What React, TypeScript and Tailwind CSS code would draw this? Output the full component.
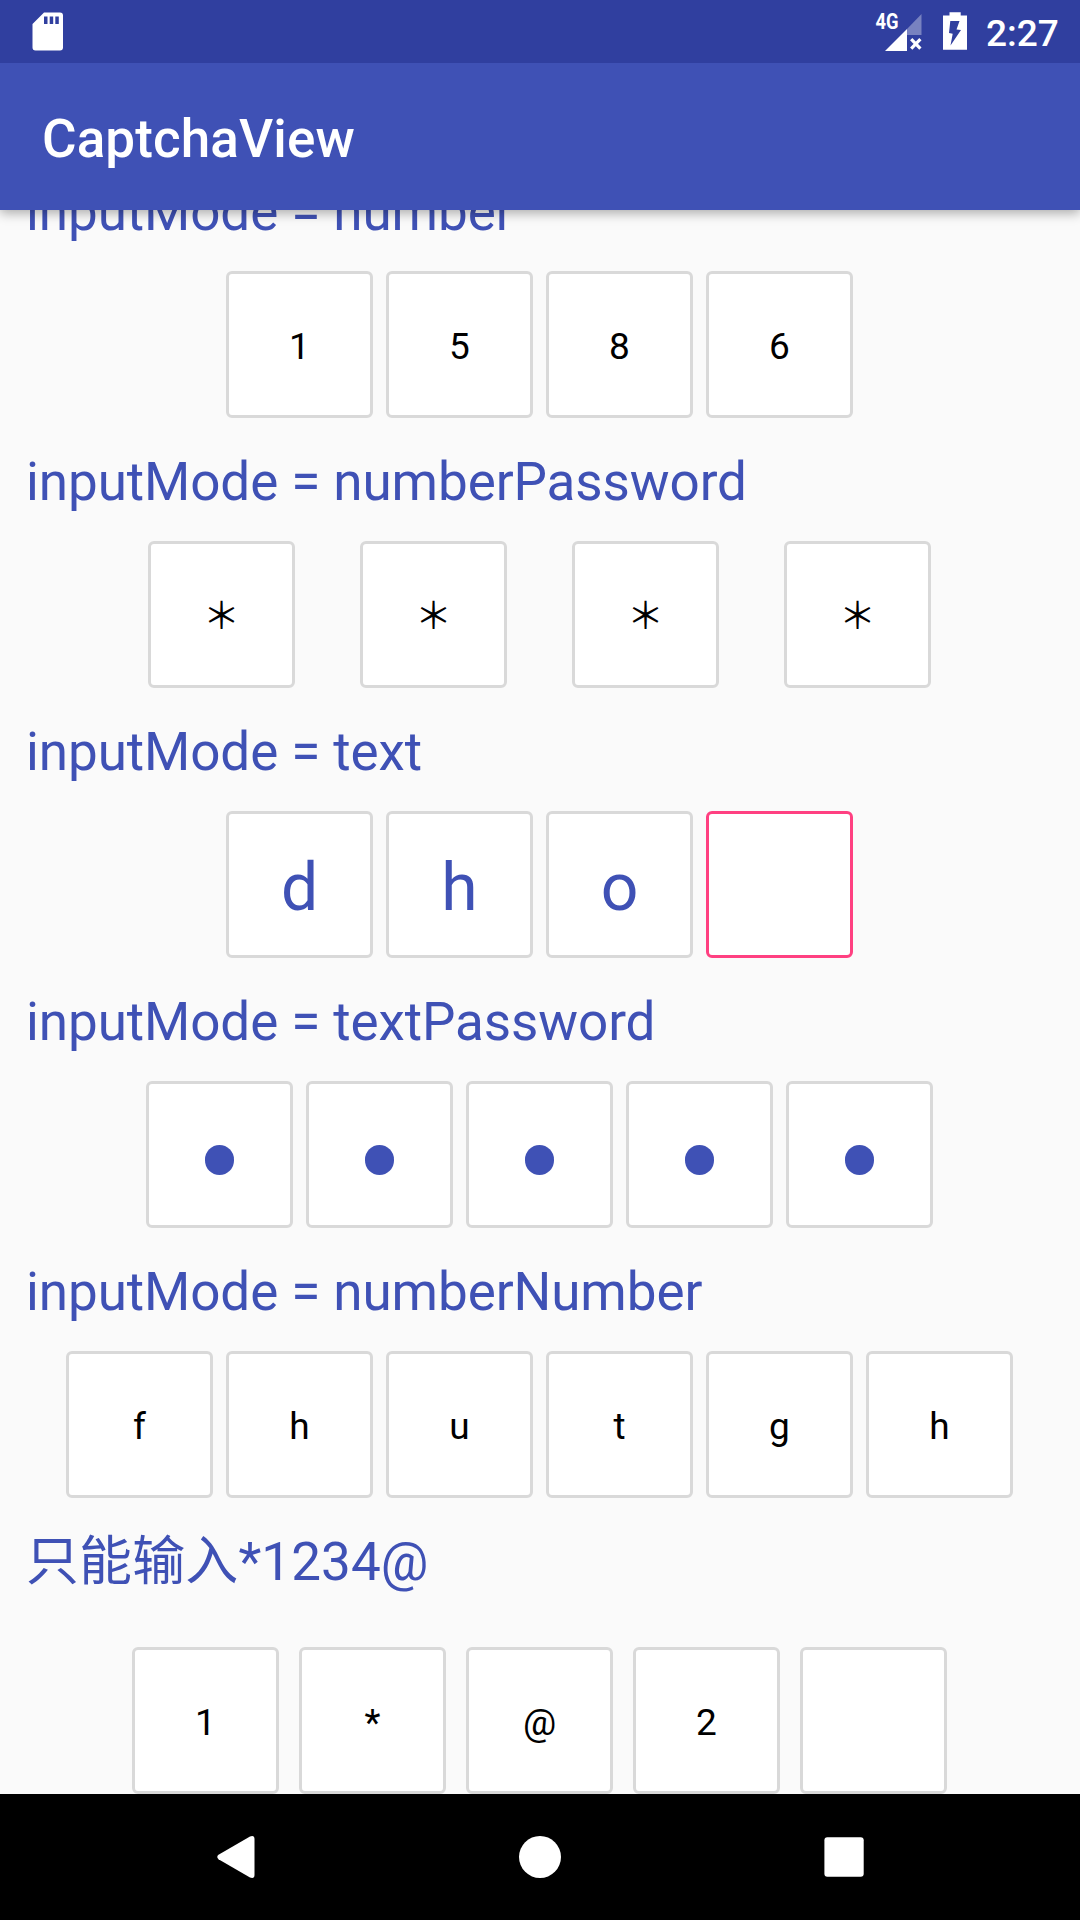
import React from "react";
import clsx from "clsx";

type Row = {
  label: string;
  cells: string[];
  gap: string;
  large?: boolean;
  focused?: number;
  tall?: boolean;
};

const rows: Row[] = [
  { label: "inputMode = number", cells: ["1", "5", "8", "6"], gap: "gap-[13px]" },
  { label: "inputMode = numberPassword", cells: ["＊", "＊", "＊", "＊"], gap: "gap-[65px]" },
  { label: "inputMode = text", cells: ["d", "h", "o", ""], gap: "gap-[13px]", large: true, focused: 3 },
  { label: "inputMode = textPassword", cells: ["•", "•", "•", "•", "•"], gap: "gap-[13px]" },
  { label: "inputMode = numberNumber", cells: ["f", "h", "u", "t", "g", "h"], gap: "gap-[13px]" },
  { label: "只能输入*1234@", cells: ["1", "*", "@", "2", ""], gap: "gap-5", tall: true },
];

function Cell({ value, large, focused }: { value: string; large?: boolean; focused: boolean }) {
  return (
    <div
      className={clsx(
        "flex size-[147px] items-center justify-center rounded-md border-[3px] bg-white leading-none",
        focused ? "border-[#ff4081]" : "border-[#d9d9d9]",
        large ? "pt-[6px] text-[66px] text-[#3f51b5]" : "pt-[4px] text-[37px] text-black",
      )}
    >
      {value === "•" ? <span className="mt-[7px] size-[29.6px] rounded-full bg-[#3f51b5]" /> : value}
    </div>
  );
}

function CaptchaRow({ row }: { row: Row }) {
  return (
    <section className="shrink-0">
      <h2
        className={clsx(
          "pt-[3px] pl-[26px] text-[53px] leading-[123px] text-[#3f51b5]",
          row.tall ? "h-[149px] tracking-[0.1px]" : "h-[123px] tracking-[-0.09px]",
        )}
      >
        {row.label}
      </h2>
      <div className={clsx("flex justify-center pr-px", row.gap)}>
        {row.cells.map((value, i) => (
          <Cell key={i} value={value} large={row.large} focused={row.focused === i} />
        ))}
      </div>
    </section>
  );
}

function StatusBar() {
  return (
    <header className="z-20 flex h-[63px] shrink-0 items-center bg-[#303f9f] pr-[21px] pl-8 text-white">
      <svg width="32" height="63" viewBox="32 0 32 63" fill="white">
        <path
          fillRule="evenodd"
          d="M44 12.5H60Q63 12.5 63 15.5V47.5Q63 50.5 60 50.5H35.5Q32.5 50.5 32.5 47.5V24ZM44 16.5V24H47.5V16.5ZM49.7 16.5V24H53.2V16.5ZM55.3 16.5V24H58.8V16.5Z"
        />
      </svg>
      <svg className="ml-auto" width="110" height="63" viewBox="875 0 110 63" fill="white">
        <text x="875.5" y="29" fontSize="22" fontWeight="700" textLength="23" lengthAdjust="spacingAndGlyphs">
          4G
        </text>
        <path d="M885 51L907 29V51Z" />
        <path d="M907 29L921.5 14V35H907Z" opacity="0.35" />
        <path d="M911.2 39.2L920.4 48.6M920.4 39.2L911.2 48.6" stroke="white" strokeWidth="3.2" />
        <path
          fillRule="evenodd"
          d="M949.5 12.3H960.7V15.5H967V49.8H943V15.5H949.5ZM950.3 21L959.5 21L956.5 29.5L961 30L950.5 45.5L952.7 33.7L949 33Z"
        />
      </svg>
      <span className="w-[74px] pt-[4px] pl-px text-[37px] leading-[63px] font-medium whitespace-nowrap">2:27</span>
    </header>
  );
}

function NavBar() {
  return (
    <nav className="z-10 flex h-[126px] shrink-0 items-center justify-between bg-black pr-[216px] pl-[217px]">
      <svg width="38" height="42" viewBox="0 0 38 42" fill="white">
        <path d="M1.5 18.8L33 .5Q37.5 -1 37.5 3V39Q37.5 43 33 41.5L1.5 23.2Q-1 21 1.5 18.8Z" />
      </svg>
      <svg width="42" height="42" viewBox="0 0 42 42" fill="white">
        <circle cx="21" cy="21" r="21" />
      </svg>
      <svg width="40" height="40" viewBox="0 0 40 40" fill="white">
        <rect x=".4" y=".3" width="39.3" height="39.4" rx="3" />
      </svg>
    </nav>
  );
}

export default function App() {
  return (
    <div className="flex h-[1920px] w-[1080px] flex-col overflow-hidden bg-[#fafafa] font-['Roboto','Noto_Sans_CJK_SC',sans-serif]">
      <StatusBar />
      <div className="z-10 h-[147px] shrink-0 bg-[#3f51b5] pl-[42px] shadow-[0_3px_11px_rgba(0,0,0,0.33)]">
        <h1 className="pt-[3px] text-[53px] leading-[147px] font-medium tracking-[0.1px] text-white">CaptchaView</h1>
      </div>
      <main className="flex h-[1584px] shrink-0 flex-col justify-end overflow-hidden">
        {rows.map((row) => (
          <CaptchaRow key={row.label} row={row} />
        ))}
      </main>
      <NavBar />
    </div>
  );
}
